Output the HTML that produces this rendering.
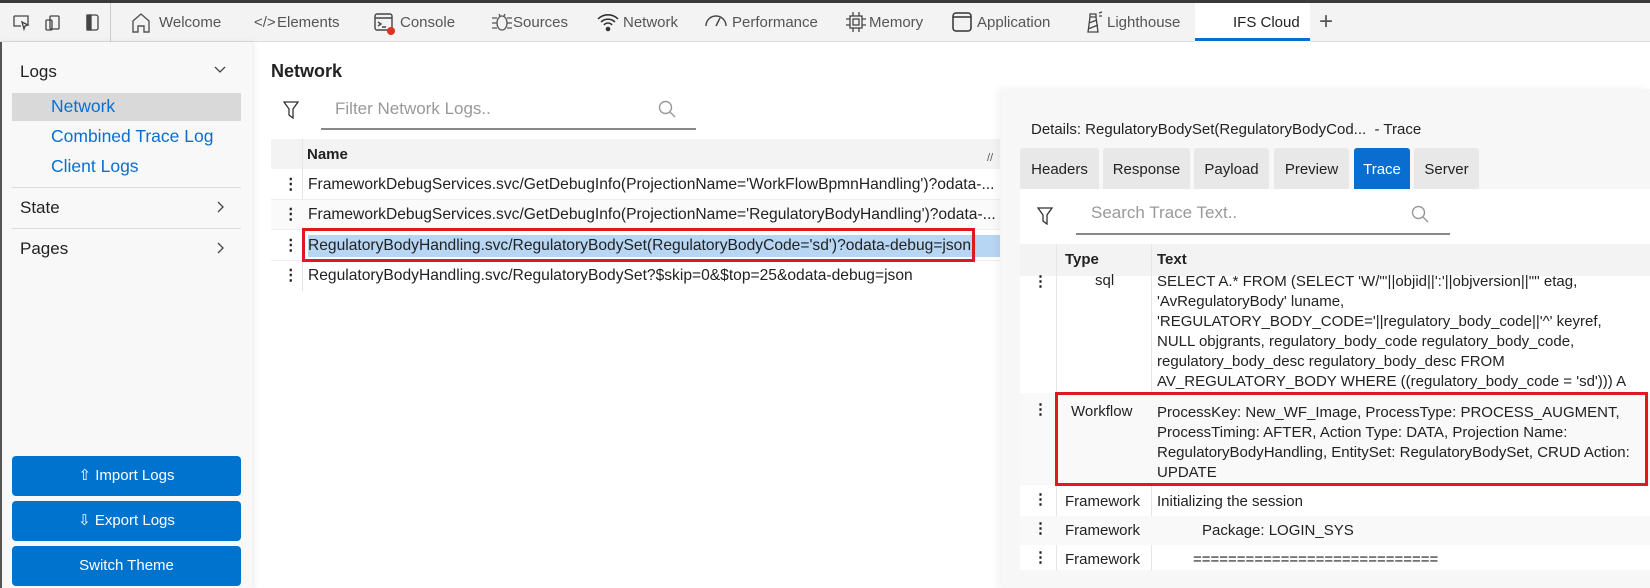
<!DOCTYPE html>
<html><head><meta charset="utf-8"><style>
*{margin:0;padding:0;box-sizing:border-box}
body{width:1650px;height:588px;overflow:hidden;background:#fff;font-family:"Liberation Sans",sans-serif;position:relative;color:#222}
.a{position:absolute;white-space:nowrap}
.top{left:0;top:0;width:1650px;height:3px;background:#3a3a3a}
.bar{left:0;top:3px;width:1650px;height:39px;background:#f3f3f3;border-bottom:1px solid #ddd}
.tab{top:14px;font-size:15px;color:#555}
.side{left:0;top:42px;width:252px;height:546px;background:#f8f8f8;box-shadow:2px 0 6px rgba(0,0,0,.08);border-left:2px solid #555}
.nav{font-size:17px;color:#222;left:20px}
.sub{font-size:17.5px;color:#0a6ed1;left:51px}
.sep{left:12px;width:229px;height:1px;background:#ddd}
.btn{left:12px;width:229px;height:40px;background:#0073cf;border-radius:4px;color:#fff;font-size:15px;text-align:center;line-height:40px}
.row{left:271px;width:729px;height:30px;border-bottom:1px solid #eee;font-size:15.6px;line-height:30px}
.row .d{position:absolute;left:12px;top:0;font-weight:bold}
.row .t{position:absolute;left:37px;top:0;padding-left:0}
.tt{font-size:15px}
.dtab{top:148px;height:41px;background:#e8e8e8;font-size:15px;line-height:43px;text-align:center;border-radius:3px 3px 0 0;color:#222}
</style></head><body>
<div class="a top"></div>
<div class="a bar"></div>
<svg class="a" style="left:12px;top:13px" width="100" height="20" viewBox="0 0 100 20" fill="none" stroke="#444" stroke-width="1.3">
<path d="M2 3h14v9M2 3v10h7"/><path d="M10 9l6 3-3 1-1 3z"/>
<rect x="38" y="3" width="9" height="13" rx="1"/><rect x="34" y="7" width="6" height="10" rx="1"/>
<rect x="75" y="2" width="11" height="15" rx="2"/><path d="M75 2h4v15h-4z" fill="#444"/>
</svg>
<div class="a" style="left:110px;top:3px;width:1px;height:39px;background:#ccc"></div>
<svg class="a" style="left:130px;top:12px" width="22" height="22" viewBox="0 0 22 22" fill="none" stroke="#555" stroke-width="1.4"><path d="M3 20V9l8-7 8 7v11h-5v-6h-6v6z"/></svg>
<div class="a tab" style="left:159px">Welcome</div>
<div class="a tab" style="left:254px">&lt;/&gt;</div>
<div class="a tab" style="left:277px">Elements</div>
<svg class="a" style="left:373px;top:12px" width="24" height="24" viewBox="0 0 24 24" fill="none" stroke="#444" stroke-width="1.4"><rect x="2" y="2" width="17" height="16" rx="2"/><path d="M2 6h17M5 10l3 2-3 2M9 15h4"/><circle cx="18" cy="19" r="4" fill="#d32" stroke="none"/></svg>
<div class="a tab" style="left:400px">Console</div>
<svg class="a" style="left:491px;top:11px" width="22" height="22" viewBox="0 0 22 22" fill="none" stroke="#555" stroke-width="1.3"><ellipse cx="11" cy="12" rx="5" ry="7"/><path d="M1 7h5M1 12h5M1 17h5M16 7h5M16 12h5M16 17h5M8 3l1 2M14 3l-1 2"/></svg>
<div class="a tab" style="left:513px">Sources</div>
<svg class="a" style="left:596px;top:12px" width="24" height="20" viewBox="0 0 24 20" fill="none" stroke="#333" stroke-width="1.6"><path d="M2 7a14 14 0 0 1 20 0M5 10a10 10 0 0 1 14 0M8 13a5 5 0 0 1 8 0"/><circle cx="12" cy="17" r="1.5" fill="#333"/></svg>
<div class="a tab" style="left:623px">Network</div>
<svg class="a" style="left:704px;top:12px" width="24" height="20" viewBox="0 0 24 20" fill="none" stroke="#444" stroke-width="1.4"><path d="M2 14a10 10 0 0 1 20 0M12 14l4-8"/></svg>
<div class="a tab" style="left:732px">Performance</div>
<svg class="a" style="left:845px;top:11px" width="22" height="22" viewBox="0 0 22 22" fill="none" stroke="#444" stroke-width="1.3"><rect x="5" y="5" width="12" height="12"/><rect x="8" y="8" width="6" height="6"/><path d="M8 1v4M14 1v4M8 17v4M14 17v4M1 8h4M1 14h4M17 8h4M17 14h4"/></svg>
<div class="a tab" style="left:869px">Memory</div>
<svg class="a" style="left:951px;top:11px" width="22" height="22" viewBox="0 0 22 22" fill="none" stroke="#333" stroke-width="1.5"><rect x="2" y="2" width="18" height="18" rx="3"/><path d="M2 6h18"/></svg>
<div class="a tab" style="left:977px">Application</div>
<svg class="a" style="left:1083px;top:10px" width="20" height="24" viewBox="0 0 20 24" fill="none" stroke="#444" stroke-width="1.3"><path d="M5 22l2-15h6l2 15zM7 7V4h6v3M6 13l8-3M5 19l10-4M16 3l3-1M16 6h3"/></svg>
<div class="a tab" style="left:1107px">Lighthouse</div>
<div class="a" style="left:1195px;top:3px;width:115px;height:39px;background:#fff"></div>
<div class="a" style="left:1195px;top:38px;width:115px;height:3px;background:#0a6ed1"></div>
<div class="a tab" style="left:1233px;color:#222">IFS Cloud</div>
<div class="a" style="left:1319px;top:8px;font-size:24px;color:#555;font-weight:300">+</div>

<div class="a side"></div>
<div class="a nav" style="top:62px">Logs</div>
<svg class="a" style="left:214px;top:66px" width="12" height="8" viewBox="0 0 12 8" fill="none" stroke="#444" stroke-width="1.3"><path d="M1 1l5 5 5-5"/></svg>
<div class="a" style="left:12px;top:93px;width:229px;height:28px;background:#d9d9d9"></div>
<div class="a sub" style="top:96px">Network</div>
<div class="a sub" style="top:126px">Combined Trace Log</div>
<div class="a sub" style="top:156px">Client Logs</div>
<div class="a sep" style="top:187px"></div>
<div class="a nav" style="top:198px">State</div>
<svg class="a" style="left:217px;top:201px" width="8" height="12" viewBox="0 0 8 12" fill="none" stroke="#444" stroke-width="1.3"><path d="M1 1l5 5-5 5"/></svg>
<div class="a sep" style="top:228px"></div>
<div class="a nav" style="top:239px">Pages</div>
<svg class="a" style="left:217px;top:242px" width="8" height="12" viewBox="0 0 8 12" fill="none" stroke="#444" stroke-width="1.3"><path d="M1 1l5 5-5 5"/></svg>
<div class="a btn" style="top:456px">⇧ Import Logs</div>
<div class="a btn" style="top:501px">⇩ Export Logs</div>
<div class="a btn" style="top:546px">Switch Theme</div>

<div class="a" style="left:271px;top:61px;font-size:18px;font-weight:bold">Network</div>
<svg class="a" style="left:283px;top:101px" width="16" height="18" viewBox="0 0 16 18" fill="none" stroke="#333" stroke-width="1.3"><path d="M1 1h14l-5 7v9l-4-3V8z"/></svg>
<div class="a" style="left:335px;top:99px;font-size:17px;color:#999">Filter Network Logs..</div>
<svg class="a" style="left:658px;top:100px" width="18" height="18" viewBox="0 0 18 18" fill="none" stroke="#999" stroke-width="1.4"><circle cx="7.5" cy="7.5" r="6"/><path d="M12 12l5 5"/></svg>
<div class="a" style="left:321px;top:128px;width:375px;height:1.5px;background:#888"></div>
<div class="a" style="left:271px;top:139px;width:729px;height:30px;background:#f3f3f3"></div>
<div class="a" style="left:302px;top:139px;width:1px;height:152px;background:#e6e6e6"></div>
<div class="a" style="left:307px;top:146px;font-size:15px;font-weight:bold">Name</div>
<div class="a" style="left:987px;top:152px;font-size:11px;color:#555">//</div>
<div class="a row" style="top:170px"><span class="d">⋮</span><span class="t">FrameworkDebugServices.svc/GetDebugInfo(ProjectionName='WorkFlowBpmnHandling')?odata-...</span></div>
<div class="a row" style="top:200px;background:#fafafa"><span class="d">⋮</span><span class="t">FrameworkDebugServices.svc/GetDebugInfo(ProjectionName='RegulatoryBodyHandling')?odata-...</span></div>
<div class="a row" style="top:231px"><span class="d">⋮</span><span class="t" style="background:#b7d6f4;width:692px;height:22px;top:4px;line-height:22px">RegulatoryBodyHandling.svc/RegulatoryBodySet(RegulatoryBodyCode='sd')?odata-debug=json</span></div>
<div class="a row" style="top:261px;border:0"><span class="d">⋮</span><span class="t">RegulatoryBodyHandling.svc/RegulatoryBodySet?$skip=0&amp;$top=25&amp;odata-debug=json</span></div>
<div class="a" style="left:302px;top:228px;width:673px;height:34px;border:3px solid #e0191f"></div>

<div class="a" style="left:1001px;top:89px;width:649px;height:499px;background:#f7f7f7;box-shadow:-3px 0 8px rgba(0,0,0,.06)"></div>
<div class="a" style="left:1031px;top:121px;font-size:15px">Details: RegulatoryBodySet(RegulatoryBodyCod...&nbsp; - Trace</div>
<div class="a dtab" style="left:1020px;width:79px">Headers</div>
<div class="a dtab" style="left:1103px;width:87px">Response</div>
<div class="a dtab" style="left:1194px;width:75px">Payload</div>
<div class="a dtab" style="left:1274px;width:75px">Preview</div>
<div class="a dtab" style="left:1354px;width:56px;background:#0a6ed1;color:#fff">Trace</div>
<div class="a dtab" style="left:1414px;width:65px">Server</div>
<div class="a" style="left:1020px;top:189px;width:630px;height:381px;background:#fff"></div>
<svg class="a" style="left:1037px;top:207px" width="16" height="18" viewBox="0 0 16 18" fill="none" stroke="#333" stroke-width="1.3"><path d="M1 1h14l-5 7v9l-4-3V8z"/></svg>
<div class="a" style="left:1091px;top:203px;font-size:17px;color:#999">Search Trace Text..</div>
<svg class="a" style="left:1411px;top:205px" width="18" height="18" viewBox="0 0 18 18" fill="none" stroke="#999" stroke-width="1.4"><circle cx="7.5" cy="7.5" r="6"/><path d="M12 12l5 5"/></svg>
<div class="a" style="left:1076px;top:233px;width:374px;height:1.5px;background:#888"></div>
<div class="a" style="left:1020px;top:244px;width:630px;height:32px;background:#f3f3f3"></div>
<div class="a" style="left:1065px;top:251px;font-size:15px;font-weight:bold">Type</div>
<div class="a" style="left:1157px;top:251px;font-size:15px;font-weight:bold">Text</div>
<div class="a" style="left:1056px;top:244px;width:1px;height:326px;background:#e6e6e6"></div>
<div class="a" style="left:1151px;top:244px;width:1px;height:326px;background:#e6e6e6"></div>
<div class="a tt" style="left:1033px;top:272px;font-weight:bold">⋮</div>
<div class="a tt" style="left:1095px;top:272px">sql</div>
<div class="a tt" style="left:1157px;top:272px;line-height:20px">SELECT A.* FROM (SELECT 'W/"'||objid||':'||objversion||'"' etag,<br>'AvRegulatoryBody' luname,<br>'REGULATORY_BODY_CODE='||regulatory_body_code||'^' keyref,<br>NULL objgrants, regulatory_body_code regulatory_body_code,<br>regulatory_body_desc regulatory_body_desc FROM<br>AV_REGULATORY_BODY WHERE ((regulatory_body_code = 'sd'))) A</div>
<div class="a" style="left:1020px;top:393px;width:630px;height:92px;background:#f9f9f9"></div>
<div class="a tt" style="left:1033px;top:400px;font-weight:bold">⋮</div>
<div class="a tt" style="left:1071px;top:403px">Workflow</div>
<div class="a tt" style="left:1157px;top:403px;line-height:20px">ProcessKey: New_WF_Image, ProcessType: PROCESS_AUGMENT,<br>ProcessTiming: AFTER, Action Type: DATA, Projection Name:<br>RegulatoryBodyHandling, EntitySet: RegulatoryBodySet, CRUD Action:<br>UPDATE</div>
<div class="a" style="left:1055px;top:392px;width:593px;height:94px;border:3px solid #e0191f"></div>
<div class="a tt" style="left:1033px;top:490px;font-weight:bold">⋮</div>
<div class="a tt" style="left:1065px;top:493px">Framework</div>
<div class="a tt" style="left:1157px;top:493px">Initializing the session</div>
<div class="a" style="left:1020px;top:516px;width:630px;height:29px;background:#f9f9f9"></div>
<div class="a tt" style="left:1033px;top:519px;font-weight:bold">⋮</div>
<div class="a tt" style="left:1065px;top:522px">Framework</div>
<div class="a tt" style="left:1202px;top:522px">Package: LOGIN_SYS</div>
<div class="a tt" style="left:1033px;top:548px;font-weight:bold">⋮</div>
<div class="a tt" style="left:1065px;top:551px">Framework</div>
<div class="a tt" style="left:1193px;top:551px">============================</div>
</body></html>
